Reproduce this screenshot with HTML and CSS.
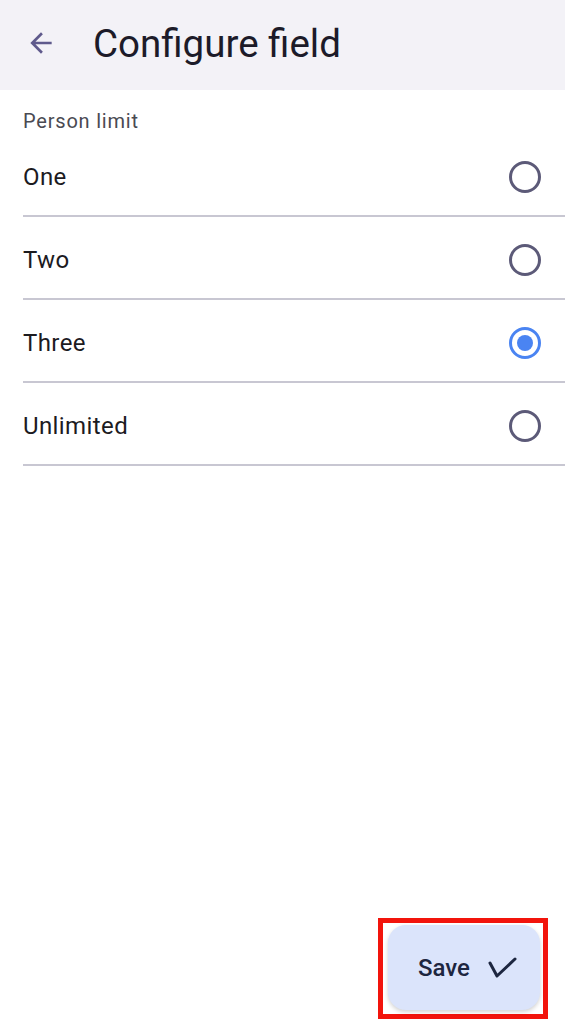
FILE: index.html
```html
<!DOCTYPE html>
<html>
<head>
<meta charset="utf-8">
<link rel="stylesheet" href="styles.css">
</head>
<body>
<div class="page">
  <header class="topbar">
    <button class="back" aria-label="Back">
      <svg width="32" height="32" viewBox="0 0 24 24"><path d="M20 11H7.83l5.59-5.59L12 4l-8 8 8 8 1.41-1.41L7.83 13H20v-2z" fill="#5f5a8c"/></svg>
    </button>
    <h1 class="title">Configure field</h1>
  </header>
  <main class="content">
    <div class="label">Person limit</div>
    <ul class="options">
      <li class="option"><span class="opt-text">One</span><span class="radio"></span></li>
      <li class="option"><span class="opt-text">Two</span><span class="radio"></span></li>
      <li class="option"><span class="opt-text">Three</span><span class="radio checked"></span></li>
      <li class="option"><span class="opt-text">Unlimited</span><span class="radio"></span></li>
    </ul>
  </main>
  <footer class="footer">
    <div class="highlight">
      <button class="save">
        <span>Save</span>
        <svg width="30" height="24" viewBox="0 0 30 24"><polyline points="3,7 10,20 28,3" fill="none" stroke="#1d2640" stroke-width="3" stroke-linecap="round" stroke-linejoin="round"/></svg>
      </button>
    </div>
  </footer>
</div>
</body>
</html>
```

FILE: styles.css
```css
* { box-sizing: border-box; }
html, body { margin: 0; padding: 0; }
body {
  font-family: Roboto, "Noto Sans", sans-serif;
  background: #ffffff;
  color: #1c1b1f;
}
.page {
  height: 1024px;
  display: flex;
  flex-direction: column;
}
.topbar {
  height: 90px;
  background: #f3f2f7;
  display: flex;
  align-items: center;
  padding-left: 25px;
  padding-bottom: 4px;
}
.back {
  border: 0;
  background: none;
  padding: 0;
  width: 32px;
  height: 32px;
  display: flex;
  margin-right: 36px;
}
.title {
  margin: 0;
  font-size: 38.5px;
  font-weight: 400;
  color: #1c1b29;
  letter-spacing: 0;
}
.content {
  padding-left: 23px;
}
.label {
  padding-top: 19px;
  height: 44px;
  line-height: 24px;
  font-size: 20px;
  color: #4a4a52;
  letter-spacing: 0.8px;
}
.options {
  list-style: none;
  margin: 0;
  padding: 0;
}
.option {
  height: 83px;
  padding-top: 4px;
  padding-right: 24px;
  display: flex;
  align-items: center;
  justify-content: space-between;
  border-bottom: 2px solid #c8c7d2;
}
.opt-text {
  font-size: 24px;
  letter-spacing: 0.4px;
  color: #1c1b1f;
}
.radio {
  width: 32px;
  height: 32px;
  border-radius: 50%;
  border: 3px solid #5c5a78;
  display: flex;
  align-items: center;
  justify-content: center;
}
.radio.checked {
  border-color: #4a84f2;
}
.radio.checked::after {
  content: "";
  width: 16px;
  height: 16px;
  border-radius: 50%;
  background: #4a84f2;
}
.footer {
  margin-top: auto;
  display: flex;
  justify-content: flex-end;
  padding-right: 17px;
  padding-bottom: 5px;
}
.highlight {
  border: 5px solid #f2140c;
  padding: 2px 3px 4px 5px;
}
.save {
  width: 152px;
  height: 85px;
  border: 0;
  border-radius: 18px;
  background: #dbe4fb;
  box-shadow: 0 2px 4px rgba(0,0,0,0.18);
  display: flex;
  align-items: center;
  padding: 0 0 0 30px;
  gap: 17px;
  font-family: Roboto, "Noto Sans", sans-serif;
  font-size: 24px;
  font-weight: 500;
  color: #1d2640;
}
```
